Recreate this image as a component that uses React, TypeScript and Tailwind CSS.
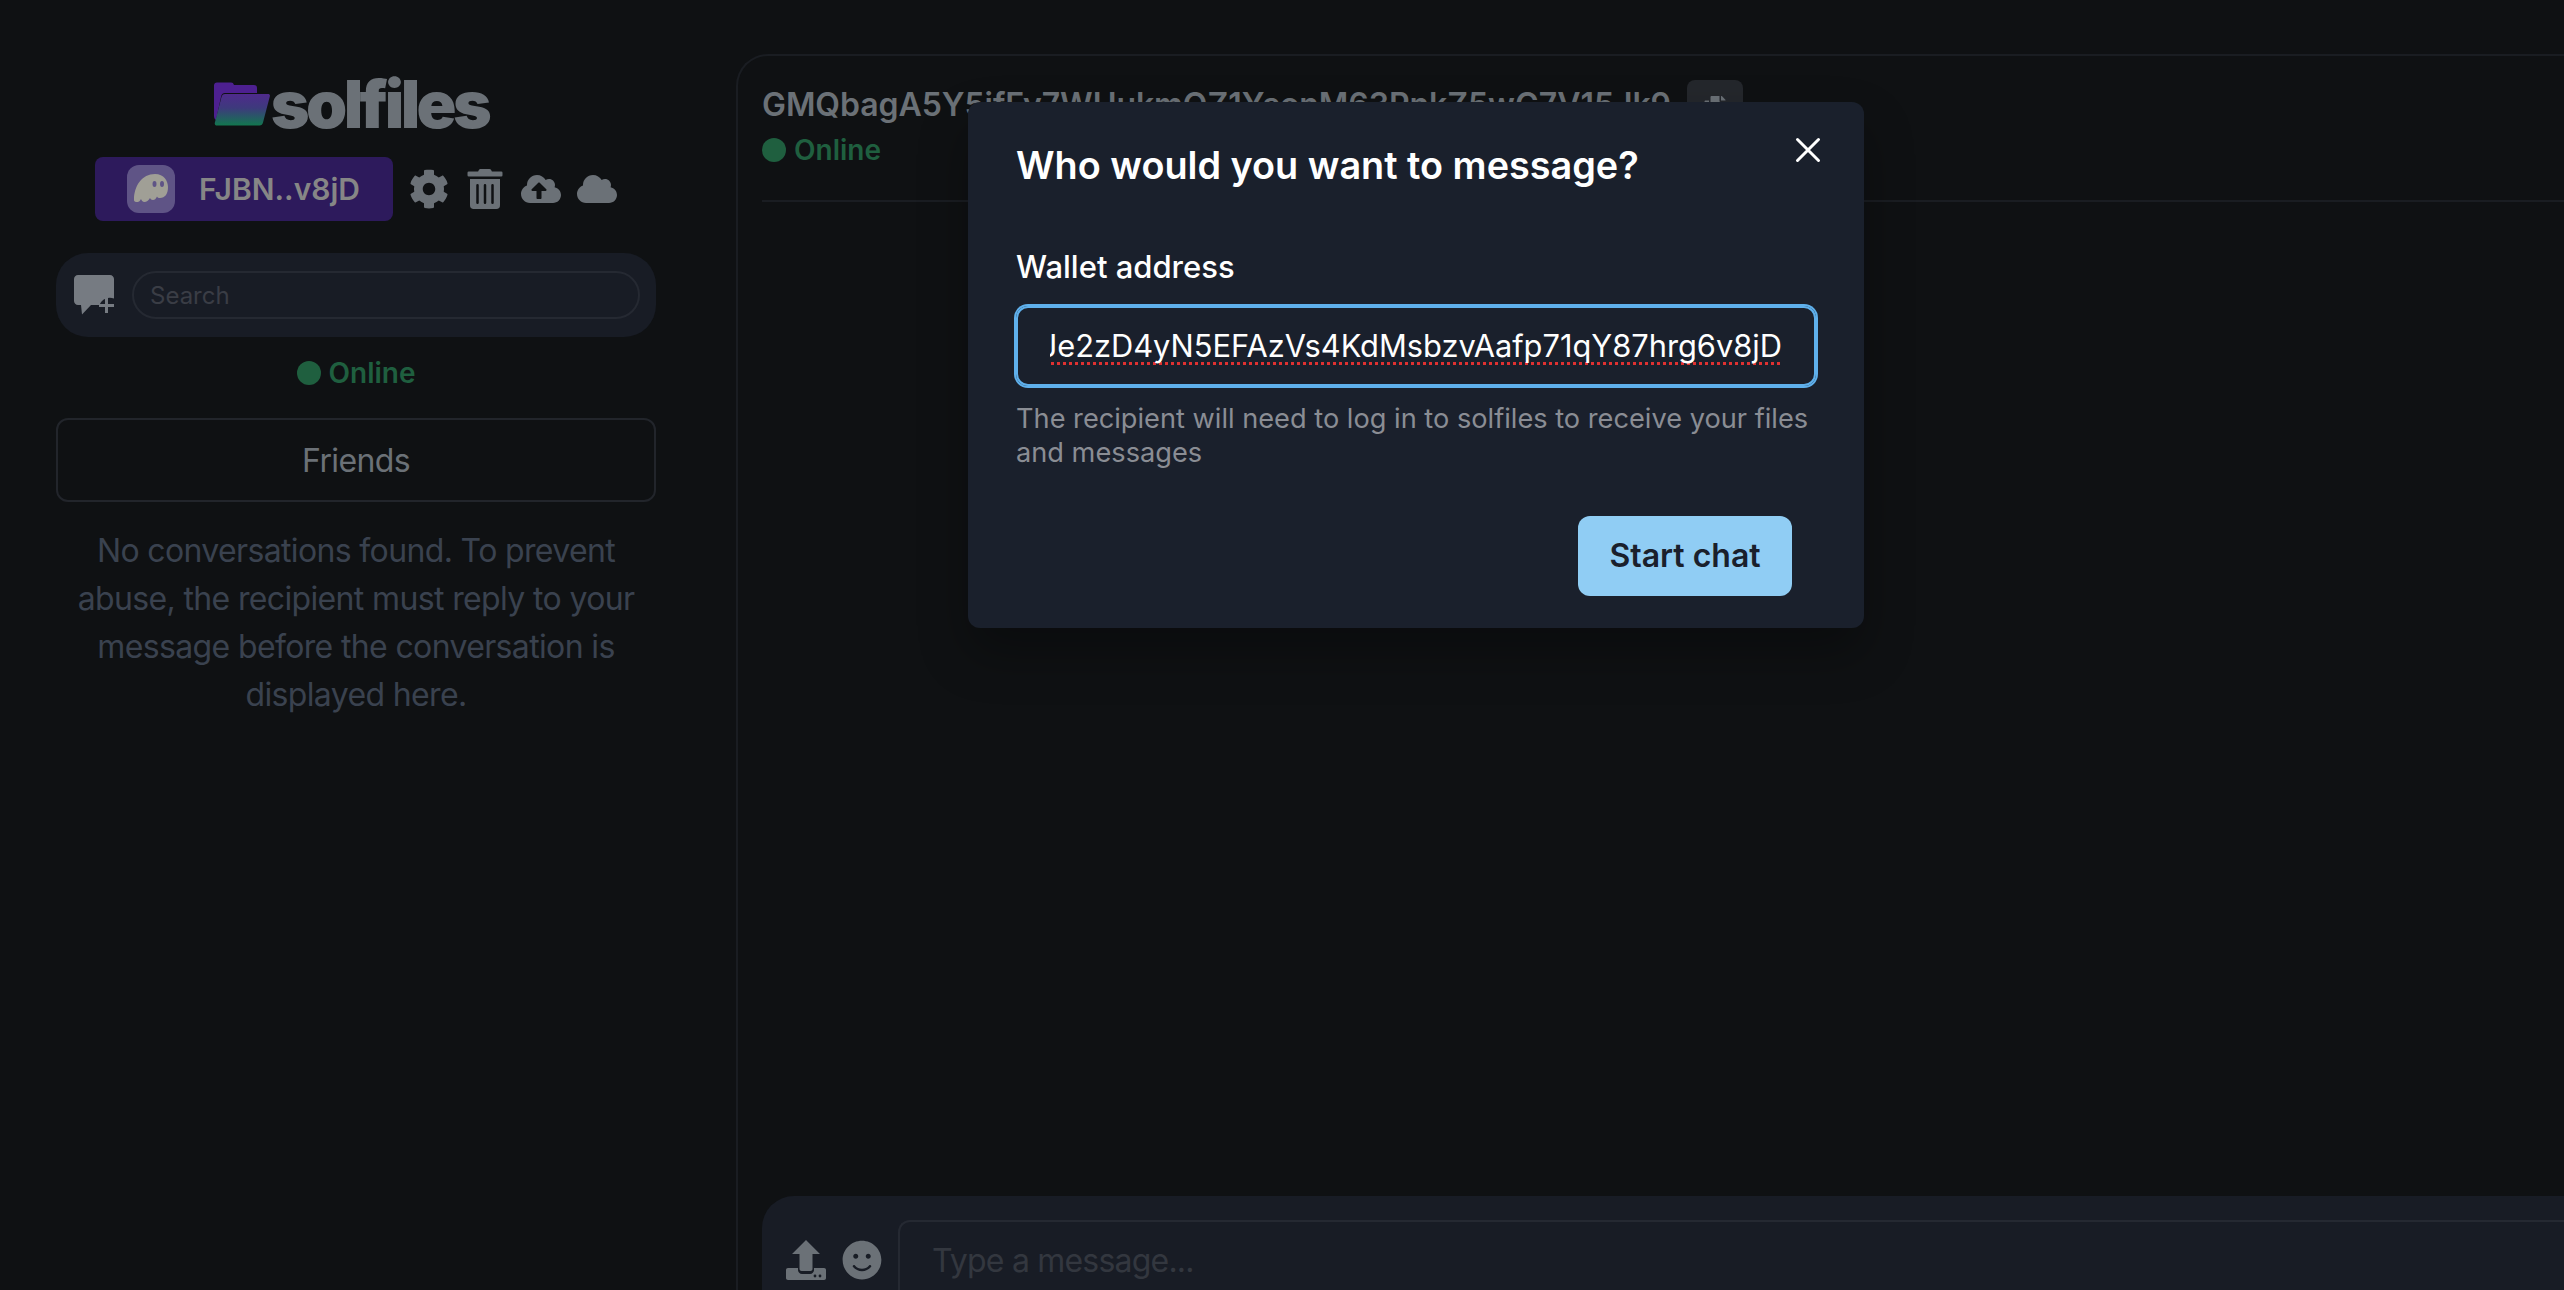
import React from "react";
import { FaCog, FaTrashAlt, FaCloudUploadAlt, FaCloud, FaSmile, FaCopy } from "react-icons/fa";
import { IoCloseOutline } from "react-icons/io5";

function Folder() {
  return (
    <svg width="56" height="44" viewBox="0 0 56 44" className="shrink-0">
      <defs>
        <linearGradient id="folderGrad" x1="0" y1="0" x2="0" y2="1">
          <stop offset="0" stopColor="#4f2a8c" />
          <stop offset="0.45" stopColor="#3d3a7c" />
          <stop offset="1" stopColor="#12774f" />
        </linearGradient>
      </defs>
      <path d="M0 3.500C0 1.600 1.200 0.500 3 0.500h14c1.600 0 2.400 0.800 3 2.500h20c2 0 3 1 3 3v5H11c-2 0-3.200 1-3.800 3L2 38C0.800 37 0 36 0 34Z" fill="#4d2090" />
      <path d="M11 12h43c1.600 0 2.200 1 1.800 2.400L49 40.500C48.500 42.500 47.400 43.500 45.500 43.500H3C1.200 43.500 0.400 42.200 0.900 40.500L7.500 15C8.100 13 9 12 11 12Z" fill="url(#folderGrad)" />
    </svg>
  );
}

function Ghost() {
  return (
    <svg width="36" height="32" viewBox="0 0 36 32">
      <path d="M1 27C1 13 9 1 22 1c9 0 13 7 13 13 0 7-3 11-8 11-1.500 0-2.500-.5-3-1.500-1 2.500-2.500 3.500-4 3.500-1.500 0-2.500-.8-3-2-1.500 2.500-3.500 4-5.500 4-2 0-3-1.500-3.500-3-1 2-2 3-3.500 3C2 29 1 28.500 1 27Z" fill="#a09f96" />
      <ellipse cx="21.500" cy="11" rx="2" ry="3" fill="#5f5486" />
      <ellipse cx="29" cy="11" rx="2" ry="3" fill="#5f5486" />
    </svg>
  );
}

function ChatPlus() {
  return (
    <svg width="40" height="40" viewBox="0 0 40 40" className="shrink-0">
      <path d="M4 0h32c2.200 0 4 1.800 4 4v19.500A11 11 0 0 0 25.500 30H17L8 39.500 7 30H4c-2.200 0-4-1.800-4-4V4C0 1.800 1.800 0 4 0Z" fill="#767b82" />
      <path d="M31 23h3v6h6v3h-6v6h-3v-6h-6v-3h6Z" fill="#767b82" />
    </svg>
  );
}

function UploadTray() {
  return (
    <svg width="40" height="40" viewBox="0 0 40 40" className="shrink-0">
      <path d="M2 28h36c1.200 0 2 .8 2 2v8c0 1.200-.8 2-2 2H2c-1.200 0-2-.8-2-2v-8c0-1.200.8-2 2-2Z" fill="#6b7177" />
      <path d="M12 26v4c0 2.200 1.800 4 4 4h8c2.200 0 4-1.800 4-4v-4Z" fill="#181c25" />
      <path d="M20 0l14 14h-7.500v15c0 1.200-1 2-2 2h-9c-1 0-2-.8-2-2V14H6Z" fill="#6b7177" />
      <circle cx="29" cy="36" r="1.400" fill="#181c25" />
      <circle cx="34" cy="36" r="1.400" fill="#181c25" />
    </svg>
  );
}

export default function App() {
  return (
    <div className="relative flex h-[1290px] w-[2564px] overflow-hidden bg-[#0f1113] font-['Inter',sans-serif]">
      <aside className="flex w-[736px] shrink-0 flex-col pl-14 pr-20 pt-[68px]">
        <div className="flex h-[72px] items-center justify-center gap-[1px] pr-[10px]">
          <Folder />
          <span className="text-[66px] font-black leading-none tracking-[-0.055em] text-[#6b7177]">solfiles</span>
        </div>
        <div className="mt-[17px] flex items-center gap-4 self-center">
          <div className="flex h-16 w-[298px] items-center gap-6 rounded-lg bg-[#2d1a5c] pl-8">
            <div className="flex h-12 w-12 items-center justify-center rounded-xl bg-[#5f5486]">
              <Ghost />
            </div>
            <span className="text-[30px] font-semibold text-[#868686]">FJBN..v8jD</span>
          </div>
          <FaCog className="h-10 w-10 text-[#6b7177]" />
          <FaTrashAlt className="h-10 w-10 text-[#6b7177]" />
          <FaCloudUploadAlt className="h-10 w-10 text-[#6b7177]" />
          <FaCloud className="h-10 w-10 text-[#6b7177]" />
        </div>
        <div className="mt-8 flex h-[84px] items-center gap-[18px] rounded-[32px] bg-[#181c25] pl-[18px] pr-4">
          <ChatPlus />
          <div className="flex h-12 flex-1 items-center rounded-3xl border-2 border-[#252932] pl-[16px] pt-[2px] text-2xl text-[#3a3d45]">Search</div>
        </div>
        <div className="mt-6 flex h-6 items-center justify-center gap-2">
          <span className="h-6 w-6 rounded-full bg-[#1f5f3f]" />
          <span className="text-[28px] font-semibold text-[#1f5f3f]">Online</span>
        </div>
        <div className="mt-[33px] flex h-[84px] items-center justify-center rounded-xl border-2 border-[#22252b] pt-[2px] text-[32px] tracking-[-0.02em] text-[#6b7177]">Friends</div>
        <p className="mt-[25px] text-center text-[32px] leading-[48px] tracking-[-0.02em] text-[#3a424f]">
          No conversations found. To prevent abuse, the recipient must reply to your message before the conversation is displayed here.
        </p>
      </aside>

      <main className="mt-[54px] flex h-[1236px] w-[2000px] shrink-0 flex-col rounded-tl-[32px] border-l-2 border-t-2 border-[#1a1d22] pl-6">
        <div className="h-[146px] shrink-0 border-b-2 border-[#1a1d22] pt-[25px]">
          <div className="flex h-12 items-center gap-4">
            <span className="text-[32px] font-semibold tracking-[-0.002em] text-[#6b7177]">GMQbagA5Y5ifFv7WHukmQZ1YsonM63PnkZ5wG7V15Jk9</span>
            <span className="mt-[6px] flex h-14 w-14 items-center justify-center rounded-lg bg-[#24272c]">
              <FaCopy className="h-6 w-6 text-[#6b7177]" />
            </span>
          </div>
          <div className="mt-[5px] flex h-8 items-center gap-2">
            <span className="h-6 w-6 rounded-full bg-[#1f5f3f]" />
            <span className="text-[28px] font-semibold text-[#1f5f3f]">Online</span>
          </div>
        </div>
        <div className="flex-1" />
        <div className="flex h-[94px] shrink-0 items-start gap-4 rounded-tl-[32px] bg-[#181c25] pl-6 pt-6">
          <div className="mt-5 flex gap-4">
            <UploadTray />
            <FaSmile className="h-10 w-10 text-[#6b7177]" />
          </div>
          <div className="h-[100px] flex-1 rounded-tl-xl border-l-2 border-t-2 border-[#252932] pl-8 pt-[19px] text-[32px] leading-10 tracking-[-0.025em] text-[#33373f]">Type a message...</div>
        </div>
      </main>

      <div className="absolute left-[968px] top-[102px] w-[896px] rounded-xl bg-[#1a202c] px-12 pb-8 pt-[39px] shadow-[0_25px_50px_rgba(0,0,0,0.3)]">
        <IoCloseOutline className="absolute right-[32px] top-[24px] h-12 w-12 text-white" />
        <h2 className="text-[37.8px] font-semibold leading-[48px] text-white">Who would you want to message?</h2>
        <label className="mt-[58px] block text-[31px] font-medium leading-10 text-white">Wallet address</label>
        <div className="mt-[19px] flex h-20 items-center rounded-xl border-2 border-[#5fb0ec] px-8 shadow-[0_0_0_2px_#5fb0ec]">
          <div className="flex w-full justify-end overflow-hidden whitespace-nowrap text-[30.8px] text-white">
            <span className="underline decoration-[#e03131] decoration-dotted decoration-[3px] underline-offset-[5px] [text-decoration-skip-ink:none]">Je2zD4yN5EFAzVs4KdMsbzvAafp71qY87hrg6v8jD</span>
          </div>
        </div>
        <p className="mt-4 text-[27.2px] leading-[33.6px] text-[#8a8d94]">
          The recipient will need to log in to solfiles to receive your files and messages
        </p>
        <div className="mt-[47px] flex justify-end pr-6">
          <div className="flex h-20 w-[214px] items-center justify-center rounded-xl bg-[#90cdf4] text-[32px] font-semibold text-[#1a202c]">Start chat</div>
        </div>
      </div>
    </div>
  );
}
